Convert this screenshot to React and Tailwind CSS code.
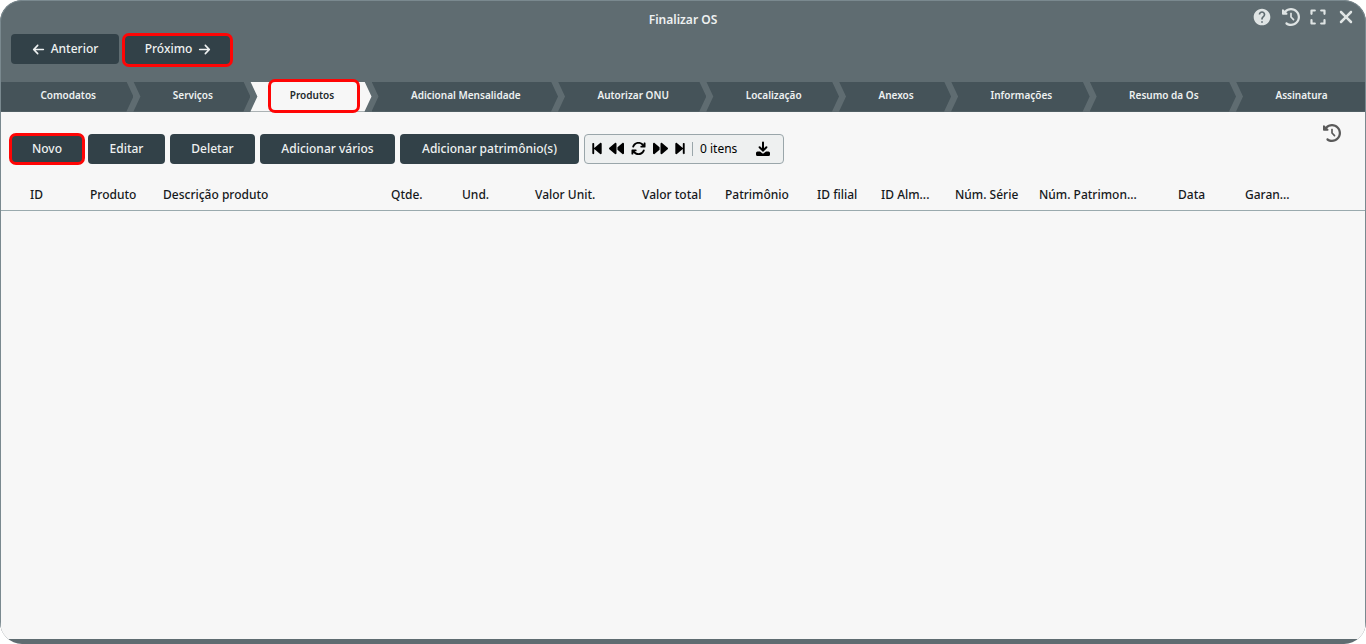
import {
  FaArrowLeft,
  FaArrowRight,
  FaArrowsRotate,
  FaBackward,
  FaBackwardStep,
  FaClockRotateLeft,
  FaForward,
  FaForwardStep,
  FaXmark,
} from "react-icons/fa6";
import { MdHelp } from "react-icons/md";

const TABS = [
  "Comodatos",
  "Serviços",
  "Produtos",
  "Adicional Mensalidade",
  "Autorizar ONU",
  "Localização",
  "Anexos",
  "Informações",
  "Resumo da Os",
  "Assinatura",
];

const COLUMNS = [
  ["ID", "w-[81px]"],
  ["Produto", "w-[73px]"],
  ["Descrição produto", "w-[228px]"],
  ["Qtde.", "w-[71px]"],
  ["Und.", "w-[73px]"],
  ["Valor Unit.", "w-[107px]"],
  ["Valor total", "w-[83px]"],
  ["Patrimônio", "w-[92px]"],
  ["ID filial", "w-[64px]"],
  ["ID Alm...", "w-[74px]"],
  ["Núm. Série", "w-[84px]"],
  ["Núm. Patrimon...", "w-[139px]"],
  ["Data", "w-[67px]"],
  ["Garan...", ""],
];

const ARROW =
  "[clip-path:polygon(0_0,calc(100%-7px)_0,100%_50%,calc(100%-7px)_100%,0_100%,7px_50%)]";
const FIRST = "[clip-path:polygon(0_0,calc(100%-7px)_0,100%_50%,calc(100%-7px)_100%,0_100%)]";
const LAST = "[clip-path:polygon(0_0,100%_0,100%_100%,0_100%,7px_50%)]";

function Highlight({ className }) {
  return (
    <span
      aria-hidden="true"
      className={`pointer-events-none absolute rounded-[7px] border-3 border-[#ff0505] ${className}`}
    />
  );
}

function Button({ children, className = "", highlight = "" }) {
  return (
    <div className="relative">
      <button
        type="button"
        className={`flex h-[30px] items-center justify-center gap-1.5 rounded bg-[#324148] text-[12px] font-medium whitespace-nowrap text-[#eef1f1] ${className}`}
      >
        {children}
      </button>
      {highlight && <Highlight className={highlight} />}
    </div>
  );
}

function IconButton({ label, children, className = "" }) {
  return (
    <button type="button" aria-label={label} className={`flex items-center justify-center ${className}`}>
      {children}
    </button>
  );
}

function ExpandIcon() {
  return (
    <svg
      width="16"
      height="16"
      viewBox="0 0 16 16"
      fill="none"
      stroke="currentColor"
      strokeWidth="2.200"
      strokeLinecap="round"
      strokeLinejoin="round"
    >
      <path d="M1.500 4.800V1.500H4.800M11.200 1.500H14.500V4.800M14.500 11.200V14.500H11.200M4.800 14.500H1.500V11.200" />
    </svg>
  );
}

function DownloadIcon() {
  return (
    <svg width="16" height="16" viewBox="0 0 16 16">
      <path
        d="M8 1.500v7.500M4.600 6.200L8 9.600l3.400-3.400"
        fill="none"
        stroke="currentColor"
        strokeWidth="2"
        strokeLinecap="round"
      />
      <path
        d="M2.500 10.500H5L8 12.800L11 10.500H13.500A1.500 1.500 0 0 1 15 12V13.500A1.500 1.500 0 0 1 13.500 15H2.500A1.500 1.500 0 0 1 1 13.500V12A1.500 1.500 0 0 1 2.500 10.500Z"
        fill="currentColor"
      />
    </svg>
  );
}

export default function App() {
  return (
    <div className="min-h-screen bg-white font-['Noto_Sans','Open_Sans',sans-serif] text-[#16191b]">
      <div className="flex min-h-screen flex-col overflow-hidden rounded-[22px] bg-[#5f6c71]">
        <header className="relative rounded-t-[22px] border-x border-t border-[#7a898f] px-2.5 pt-[33px] pb-[17px]">
          <h1 className="absolute inset-x-0 top-[10px] text-center text-[12px] leading-[18px] font-semibold text-[#eef1f1]">
            Finalizar OS
          </h1>
          <div className="absolute top-1.5 right-[9px] flex items-center gap-2.5 text-[#dfe4e4]">
            <IconButton label="Ajuda">
              <MdHelp size={20} />
            </IconButton>
            <IconButton label="Histórico">
              <FaClockRotateLeft size={18} />
            </IconButton>
            <IconButton label="Expandir">
              <ExpandIcon />
            </IconButton>
            <IconButton label="Fechar">
              <FaXmark size={20} />
            </IconButton>
          </div>
          <div className="flex gap-1.5">
            <Button className="w-[108px]">
              <FaArrowLeft size={13} />
              Anterior
            </Button>
            <Button className="w-[106px]" highlight="-top-px -right-0.5 -bottom-[3px] -left-[3px]">
              Próximo
              <FaArrowRight size={13} />
            </Button>
          </div>
        </header>

        <nav className="flex border-x border-[#7a898f]" aria-label="Etapas">
          {TABS.map((tab, i) => {
            const active = tab === "Produtos";
            const shape = i === 0 ? FIRST : i === TABS.length - 1 ? LAST : ARROW;
            return (
              <div key={tab} className="relative flex-auto">
                <button
                  type="button"
                  aria-current={active ? "step" : undefined}
                  className={`h-[30px] w-full pr-4 pb-0.5 pl-[18px] text-[10px] font-semibold whitespace-nowrap ${shape} ${
                    active ? "bg-[#f7f7f7] text-[#22292c]" : "bg-[#455359] text-[#eef1f1]"
                  }`}
                >
                  {tab}
                </button>
                {active && <Highlight className="-top-0.5 right-3 -bottom-px left-[18px]" />}
              </div>
            );
          })}
        </nav>

        <main className="flex-1 border-x border-[#7a898f] bg-[#f7f7f7]">
          <div className="flex items-start justify-between pt-[22px] pr-6 pl-2.5">
            <div className="flex gap-[5px]">
              <Button className="w-[72px]" highlight="-inset-x-0.5 -inset-y-px">
                Novo
              </Button>
              <Button className="w-[77px]">Editar</Button>
              <Button className="w-[85px]">Deletar</Button>
              <Button className="w-[135px]">Adicionar vários</Button>
              <Button className="w-[179px]">Adicionar patrimônio(s)</Button>
              <div className="flex h-[30px] w-[200px] items-center gap-[7px] rounded border border-[#9aa6aa] bg-[#eef0f0] pr-3 pl-[7px] text-[12px] text-black">
                <IconButton label="Primeira página" className="w-2.5">
                  <FaBackwardStep size={15} />
                </IconButton>
                <IconButton label="Página anterior">
                  <FaBackward size={15} />
                </IconButton>
                <IconButton label="Atualizar">
                  <FaArrowsRotate size={15} />
                </IconButton>
                <IconButton label="Próxima página">
                  <FaForward size={15} />
                </IconButton>
                <IconButton label="Última página" className="w-2.5">
                  <FaForwardStep size={15} />
                </IconButton>
                <span className="h-3.5 w-px bg-[#9aa6aa]" />
                <span className="whitespace-nowrap">0 itens</span>
                <IconButton label="Exportar" className="ml-auto">
                  <DownloadIcon />
                </IconButton>
              </div>
            </div>
            <IconButton label="Histórico" className="-mt-2.5 text-[#5a5a5a]">
              <FaClockRotateLeft size={18} />
            </IconButton>
          </div>

          <table className="mt-[15px] w-full table-fixed border-collapse text-left text-[12px]">
            <thead>
              <tr className="h-8 border-b border-[#9aaaae]">
                {COLUMNS.map(([name, width], i) => (
                  <th
                    key={name}
                    scope="col"
                    className={`pt-0.5 font-medium whitespace-nowrap ${width} ${i === 0 ? "pl-[29px]" : "pl-2"}`}
                  >
                    {name}
                  </th>
                ))}
              </tr>
            </thead>
            <tbody />
          </table>
        </main>
        <div className="h-[5px]" />
      </div>
    </div>
  );
}
